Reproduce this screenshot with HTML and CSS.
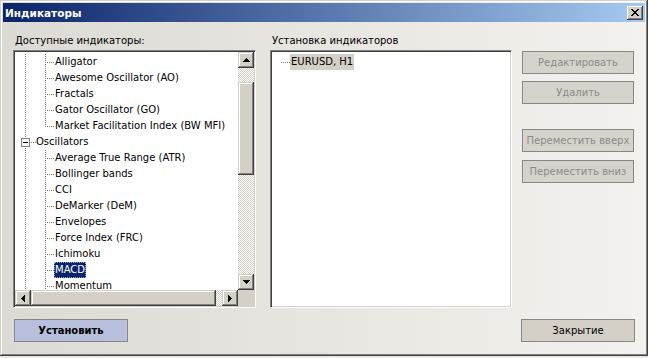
FILE: index.html
```html
<!DOCTYPE html>
<html>
<head>
<meta charset="utf-8">
<link rel="stylesheet" href="styles.css">
</head>
<body>
<div class="window">
  <div class="titlebar">
    <span class="title">Индикаторы</span>
    <button class="close" aria-label="close"><svg width="8" height="7" viewBox="0 0 8 7"><path fill="#000" d="M0 0h2v1h-2zM6 0h2v1h-2zM1 1h2v1h-2zM5 1h2v1h-2zM2 2h4v1h-4zM3 3h2v1h-2zM2 4h4v1h-4zM1 5h2v1h-2zM5 5h2v1h-2zM0 6h2v1h-2zM6 6h2v1h-2z"/></svg></button>
  </div>
  <div class="content">
    <div class="main">
      <div class="col col-left">
        <div class="label">Доступные индикаторы:</div>
        <div class="box tree-box">
          <div class="tree">
            <div class="row child"><span class="item">Alligator</span></div>
            <div class="row child"><span class="item">Awesome Oscillator (AO)</span></div>
            <div class="row child"><span class="item">Fractals</span></div>
            <div class="row child"><span class="item">Gator Oscillator (GO)</span></div>
            <div class="row child last"><span class="item">Market Facilitation Index (BW MFI)</span></div>
            <div class="row group"><span class="expander"></span><span class="item">Oscillators</span></div>
            <div class="row child"><span class="item">Average True Range (ATR)</span></div>
            <div class="row child"><span class="item">Bollinger bands</span></div>
            <div class="row child"><span class="item">CCI</span></div>
            <div class="row child"><span class="item">DeMarker (DeM)</span></div>
            <div class="row child"><span class="item">Envelopes</span></div>
            <div class="row child"><span class="item">Force Index (FRC)</span></div>
            <div class="row child"><span class="item">Ichimoku</span></div>
            <div class="row child"><span class="item sel">MACD</span></div>
            <div class="row child"><span class="item">Momentum</span></div>
          </div>
          <div class="vscroll">
            <div class="sbtn"><svg width="7" height="4" viewBox="0 0 7 4"><path fill="#000" d="M3 0H4V1H5V2H6V3H7V4H0V3H1V2H2V1H3Z"/></svg></div>
            <div class="track track-top"></div>
            <div class="thumb vthumb"></div>
            <div class="track track-fill"></div>
            <div class="sbtn"><svg width="7" height="4" viewBox="0 0 7 4"><path fill="#000" d="M0 0H7V1H6V2H5V3H4V4H3V3H2V2H1V1H0Z"/></svg></div>
          </div>
          <div class="hscroll">
            <div class="sbtn"><svg width="4" height="7" viewBox="0 0 4 7"><path fill="#000" d="M3 0H4V7H3V6H2V5H1V4H0V3H1V2H2V1H3Z"/></svg></div>
            <div class="thumb hthumb"></div>
            <div class="track track-fill"></div>
            <div class="sbtn"><svg width="4" height="7" viewBox="0 0 4 7"><path fill="#000" d="M0 0H1V1H2V2H3V3H4V4H3V5H2V6H1V7H0Z"/></svg></div>
          </div>
          <div class="corner"></div>
        </div>
      </div>
      <div class="col col-right">
        <div class="label">Установка индикаторов</div>
        <div class="box list-box">
          <div class="list">
            <div class="row root"><span class="item inactive">EURUSD, H1</span></div>
          </div>
        </div>
      </div>
      <div class="side-buttons">
        <button class="btn" disabled>Редактировать</button>
        <button class="btn b2" disabled>Удалить</button>
        <button class="btn b3" disabled>Переместить вверх</button>
        <button class="btn b4" disabled>Переместить вниз</button>
      </div>
    </div>
    <div class="bottom">
      <button class="btn wide primary">Установить</button>
      <button class="btn wide">Закрытие</button>
    </div>
  </div>
</div>
</body>
</html>
```
FILE: styles.css
```css
html, body {
  margin: 0;
  padding: 0;
}
body {
  width: 648px;
  height: 358px;
  overflow: hidden;
  background: #e9e8e4;
  font-family: "DejaVu Sans", sans-serif;
  font-size: 10px;
  color: #000;
}
.window {
  box-sizing: border-box;
  width: 648px;
  height: 356px;
  padding: 3px;
  display: flex;
  flex-direction: column;
  background: linear-gradient(to right, #dcdad4, #f3f2ee);
  box-shadow: inset -1px -1px #404040, inset 1px 1px #d4d0c8, inset -2px -2px #808080, inset 2px 2px #ffffff;
}
.titlebar {
  height: 19px;
  display: flex;
  align-items: center;
  padding-left: 2px;
  background: linear-gradient(to right, #0a246a, #a6caf0);
}
.title {
  flex: 1;
  color: #fff;
  font-weight: bold;
  font-size: 10.5px;
}
.close {
  width: 16px;
  height: 14px;
  margin-right: 2px;
  padding: 0;
  border: 0;
  display: flex;
  align-items: center;
  justify-content: center;
  background: #d4d0c8;
  box-shadow: inset -1px -1px #404040, inset 1px 1px #ffffff, inset -2px -2px #808080, inset 2px 2px #d4d0c8;
}
.content {
  flex: 1;
  padding: 12px 10px 0 10px;
  display: flex;
  flex-direction: column;
}
.main {
  display: flex;
}
.col-left {
  width: 243px;
}
.col-right {
  width: 242px;
  margin-left: 14px;
}
.label {
  height: 14px;
  line-height: 14px;
  margin: 0 0 2px 2px;
  white-space: nowrap;
}
.box {
  box-sizing: border-box;
  height: 258px;
  padding: 1px;
  background: #fff;
  border: 1px solid;
  border-color: #808080 #ffffff #ffffff #808080;
  box-shadow: inset 1px 1px #404040, inset -1px -1px #d4d0c8;
}
.tree-box {
  display: grid;
  grid-template-columns: 223px 16px;
  grid-template-rows: 238px 16px;
}
.tree {
  overflow: hidden;
  min-width: 0;
  padding-top: 2px;
  white-space: nowrap;
}
.row {
  height: 16px;
  line-height: 16px;
  display: flex;
  align-items: center;
}
.item {
  padding: 0 1px;
  line-height: 16px;
}
.child {
  padding-left: 39px;
  background:
    repeating-linear-gradient(to bottom, #808080 0 1px, transparent 1px 2px) 10px 0 / 1px 16px no-repeat,
    repeating-linear-gradient(to bottom, #808080 0 1px, transparent 1px 2px) 30px 0 / 1px 16px no-repeat,
    repeating-linear-gradient(to right, #808080 0 1px, transparent 1px 2px) 32px 8px / 7px 1px no-repeat;
}
.child.last {
  background:
    repeating-linear-gradient(to bottom, #808080 0 1px, transparent 1px 2px) 10px 0 / 1px 16px no-repeat,
    repeating-linear-gradient(to bottom, #808080 0 1px, transparent 1px 2px) 30px 0 / 1px 9px no-repeat,
    repeating-linear-gradient(to right, #808080 0 1px, transparent 1px 2px) 32px 8px / 7px 1px no-repeat;
}
.group {
  align-items: flex-start;
  background:
    repeating-linear-gradient(to bottom, #808080 0 1px, transparent 1px 2px) 10px 0 / 1px 16px no-repeat,
    repeating-linear-gradient(to right, #808080 0 1px, transparent 1px 2px) 16px 8px / 5px 1px no-repeat;
}
.group .item {
  margin-left: 5px;
}
.expander {
  box-sizing: border-box;
  width: 9px;
  height: 9px;
  margin: 4px 0 0 6px;
  border: 1px solid #808080;
  background: linear-gradient(#000, #000) 1px 3px / 5px 1px no-repeat, #fff;
}
.sel {
  background: #0a246a;
  color: #fff;
  outline: 1px dotted #9aa6c8;
  outline-offset: -1px;
}
.vscroll {
  display: flex;
  flex-direction: column;
}
.hscroll {
  display: flex;
}
.sbtn, .thumb {
  box-sizing: border-box;
  width: 16px;
  height: 16px;
  flex: none;
  display: flex;
  align-items: center;
  justify-content: center;
  background: #d4d0c8;
  box-shadow: inset -1px -1px #404040, inset 1px 1px #d4d0c8, inset -2px -2px #808080, inset 2px 2px #ffffff;
}
.track {
  background: repeating-conic-gradient(#d4d0c8 0 25%, #ffffff 0 50%) 0 0 / 2px 2px;
}
.track-top {
  height: 14px;
  flex: none;
}
.track-fill {
  flex: 1;
}
.vthumb {
  height: 93px;
}
.hthumb {
  width: 185px;
}
.corner {
  background: #d4d0c8;
}
.list {
  padding-top: 2px;
}
.root {
  padding-left: 18px;
  background: repeating-linear-gradient(to right, #808080 0 1px, transparent 1px 2px) 9px 8px / 9px 1px no-repeat;
}
.inactive {
  background: #d4d0c8;
}
.side-buttons {
  width: 112px;
  margin-left: 10px;
  margin-top: 17px;
  display: flex;
  flex-direction: column;
}
.btn {
  box-sizing: border-box;
  height: 23px;
  padding: 0;
  border: 1px solid #878787;
  background: #d4d0c8;
  font-family: "DejaVu Sans", sans-serif;
  font-size: 10px;
  color: #000;
  text-align: center;
}
.btn:disabled {
  color: #8a8a8a;
  background: #d6d3cc;
}
.b2 { margin-top: 7px; }
.b3 { margin-top: 25px; }
.b4 { margin-top: 8px; }
.bottom {
  display: flex;
  justify-content: space-between;
  margin-top: 11px;
  padding-left: 1px;
}
.wide {
  width: 114px;
}
.primary {
  background: #b7bfdc;
  font-weight: bold;
}
```
